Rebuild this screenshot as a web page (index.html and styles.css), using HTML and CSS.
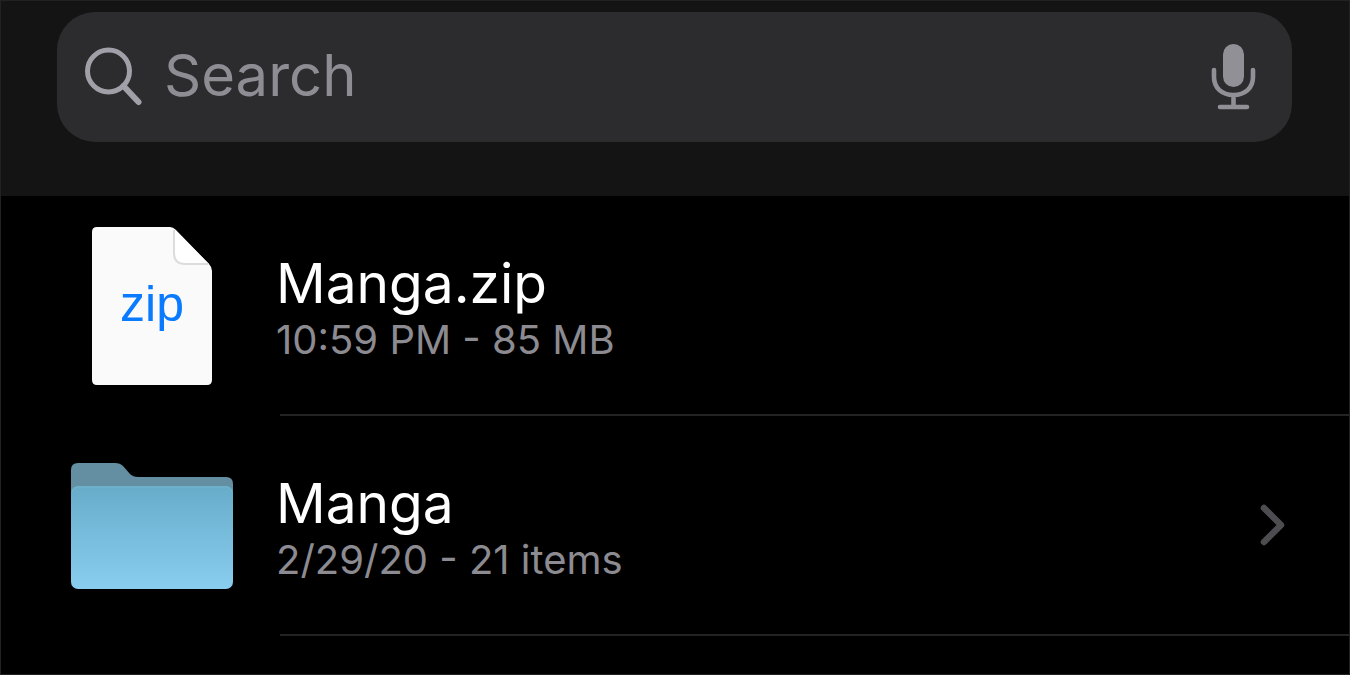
FILE: index.html
```html
<!DOCTYPE html>
<html lang="en">
<head>
    <meta charset="UTF-8">
    <meta name="viewport" content="width=device-width, initial-scale=1.0">
    <title>Files</title>
    <link rel="stylesheet" href="styles.css">
</head>
<body>
    <div class="page">
        <header class="top-bar">
            <form class="search">
                <label class="search-label" for="search" aria-label="Search">
                    <svg width="58" height="60" viewBox="0 0 58 60" fill="none" stroke="#a1a0a8" aria-hidden="true">
                        <circle cx="23.500" cy="24" r="21" stroke-width="5"/>
                        <path d="M38.500 39L53.500 55" stroke-width="6" stroke-linecap="round"/>
                    </svg>
                </label>
                <input class="search-input" id="search" type="text" placeholder="Search">
                <button class="mic" type="button" aria-label="Dictate">
                    <svg width="46" height="68" viewBox="0 0 46 68" fill="none" stroke="#919097" stroke-width="4.600" stroke-linecap="round" aria-hidden="true">
                        <rect x="13" y="1" width="21" height="43" rx="10.5" fill="#919097" stroke="none"/>
                        <path d="M4 27v7c0 11 8 18 19.500 18S43 45 43 34v-7M23.500 52v12M10 64h27"/>
                    </svg>
                </button>
            </form>
        </header>

        <main class="files">
            <a class="file" href="#">
                <span class="file-icon">
                    <svg width="120" height="160" viewBox="0 0 120 160" aria-hidden="true">
                        <path d="M5 1H78Q81 1 84 4L117 38Q120 41 120 45V154Q120 159 115 159H5Q0 159 0 154V6Q0 1 5 1Z" fill="#fafafa"/>
                        <path d="M82 3V27Q82 38 93 38H117Z" fill="#fff"/>
                        <path d="M82 4V27Q82 38 93 38H116" fill="none" stroke="#dcdcdc" stroke-width="2"/>
                        <text class="zip-text" x="60" y="95" text-anchor="middle">zip</text>
                    </svg>
                </span>
                <span class="file-body">
                    <span class="file-text">
                        <span class="file-name">Manga.zip</span>
                        <span class="file-info">10:59 PM - 85 MB</span>
                    </span>
                </span>
            </a>
            <a class="file" href="#">
                <span class="file-icon">
                    <svg width="162" height="128" viewBox="0 0 162 128" aria-hidden="true">
                        <defs>
                            <linearGradient id="folder" x1="0" y1="0" x2="0" y2="1">
                                <stop offset="0" stop-color="#67adca"/>
                                <stop offset="1" stop-color="#89cdef"/>
                            </linearGradient>
                        </defs>
                        <path d="M0 40V8Q0 1 7 1H44Q49 1 52 4L59 12Q62 15 67 15H155Q162 15 162 22V40Z" fill="#648fa3"/>
                        <rect x="0" y="24" width="162" height="103" rx="7" fill="url(#folder)"/>
                        <path d="M1 30Q2 25 7 25H155Q160 25 161 30" fill="none" stroke="#74b3cd"/>
                    </svg>
                </span>
                <span class="file-body">
                    <span class="file-text">
                        <span class="file-name">Manga</span>
                        <span class="file-info">2/29/20 - 21 items</span>
                    </span>
                    <svg class="chevron" width="28" height="44" viewBox="0 0 28 44" fill="none" stroke="#4d4c50" stroke-width="6.500" stroke-linecap="round" stroke-linejoin="round" aria-hidden="true">
                        <path d="M6 5L23 22L6 39"/>
                    </svg>
                </span>
            </a>
        </main>
    </div>
</body>
</html>
```

FILE: styles.css
```css
* { margin: 0; padding: 0; box-sizing: border-box; }
body { font-family: Inter, "Liberation Sans", sans-serif; background: #000; color: #fff; }
svg { display: block; }
.page { min-height: 100vh; border: 1px solid #222; }

.top-bar { padding: 11px 57px 54px 56px; background: #141414; }
.search { display: flex; align-items: center; height: 130px; padding: 0 36px 0 28px; border-radius: 38px; background: #2c2c2e; }
.search-label { flex: none; }
.search-input { flex: 1; min-width: 0; height: 80px; margin-left: 21px; padding-bottom: 4px; border: none; outline: none; background: none; color: #fff; font-family: inherit; font-size: 58px; }
.search-input::placeholder { color: #8e8d94; opacity: 1; }
.mic { flex: none; border: none; background: none; cursor: pointer; }

.file { display: flex; height: 220px; color: inherit; text-decoration: none; }
.file-icon { display: flex; flex: none; align-items: center; justify-content: center; width: 279px; padding-left: 22px; }
.zip-text { font-family: "Liberation Sans", sans-serif; font-size: 50px; fill: #0a7aff; }
.file-body { display: flex; flex: 1; align-items: center; justify-content: space-between; min-width: 0; padding-right: 63px; border-bottom: 2px solid #232324; }
.file-text { display: flex; flex-direction: column; margin-left: -4px; padding-top: 4px; }
.file-name { font-size: 55px; line-height: 66px; }
.file-info { color: #8c8b91; font-size: 40px; line-height: 48px; }
.chevron { flex: none; }
```
